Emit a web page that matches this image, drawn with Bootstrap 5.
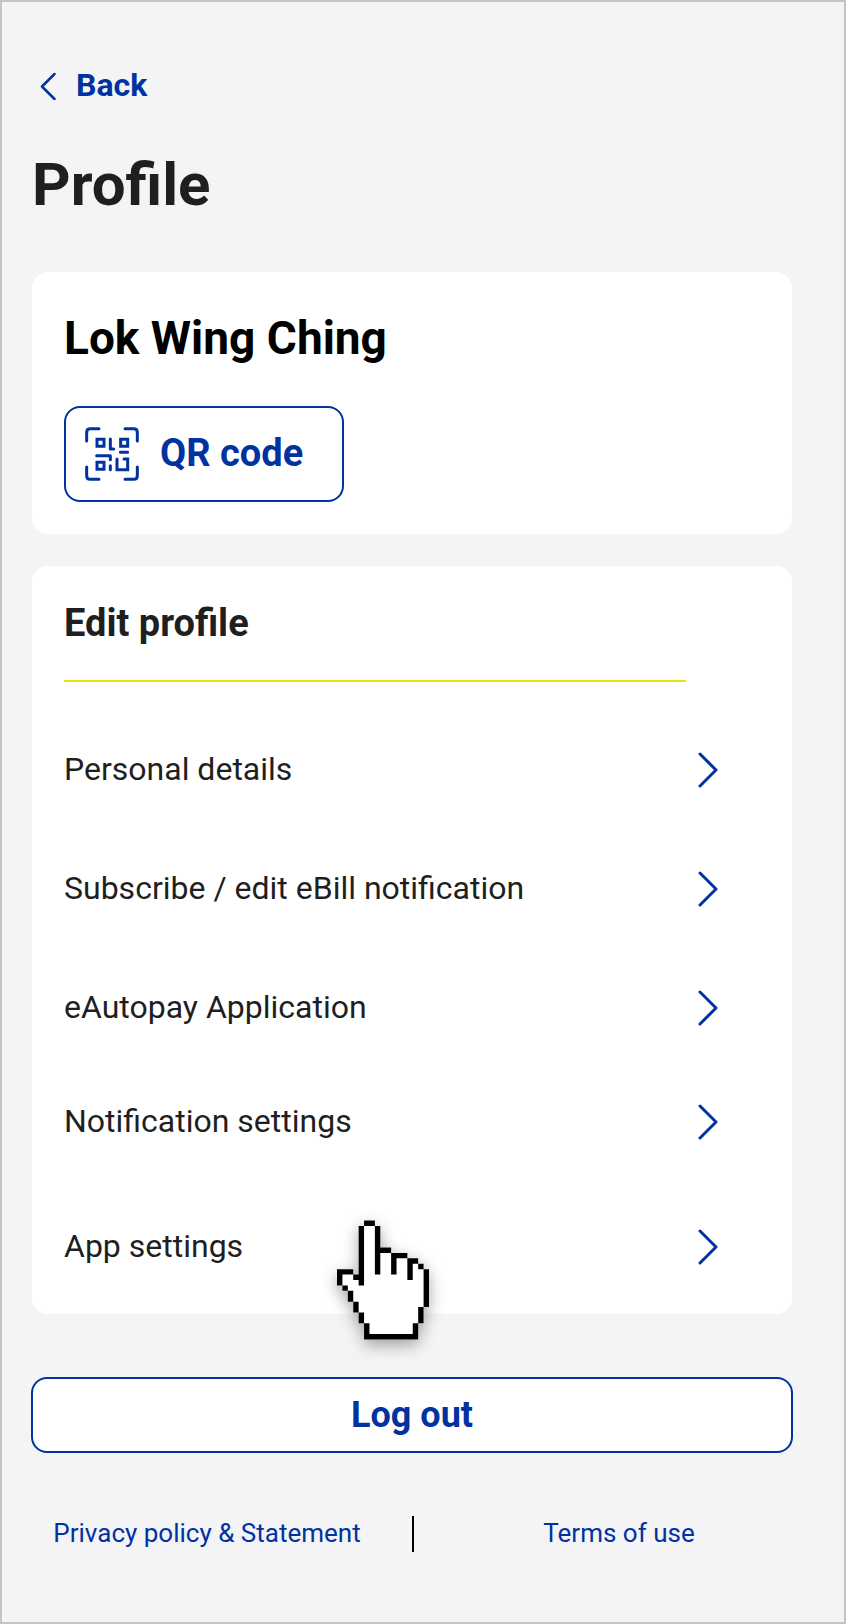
<!DOCTYPE html>
<html lang="en">
<head>
<meta charset="utf-8">
<meta name="viewport" content="width=device-width, initial-scale=1">
<title>Profile</title>
<link href="https://cdn.jsdelivr.net/npm/bootstrap@5.3.0/dist/css/bootstrap.min.css" rel="stylesheet">
<style>
  :root { --brand: #0032a0; --ink: #1f1f1f; --line: #c4c4c4; --sun: #f0dc0a; }
  body { font-family: Roboto, "Liberation Sans", sans-serif; background: #f4f4f7; color: var(--ink); font-size: 32px; line-height: 48px; }
  a, a:hover { color: var(--brand); }
  svg { display: block; flex: none; }
  .icon-line { fill: none; stroke: var(--brand); stroke-linecap: round; stroke-linejoin: round; margin-top: 2px; }
  .app-frame { border: 2px solid var(--line); }
  .screen { padding: 63px 52px 0 30px; }
  .back-link { line-height: 40px; gap: 20px; padding-left: 8px; }
  .page-title { font-size: 60px; line-height: 72px; margin: 44px 0 51px; }
  .panel { border: 0; border-radius: 16px; }
  .user-panel { padding: 38px 32px 32px; margin-bottom: 32px; }
  .user-name { font-size: 46px; line-height: 56px; margin-bottom: 40px; color: #000; }
  .btn-brand { --bs-btn-color: var(--brand); --bs-btn-bg: #fff; --bs-btn-border-color: var(--brand); --bs-btn-border-width: 2px; --bs-btn-border-radius: 16px;
    --bs-btn-hover-color: #fff; --bs-btn-hover-bg: var(--brand); --bs-btn-hover-border-color: var(--brand); --bs-btn-font-weight: 700; }
  .qr-btn { font-size: 38px; line-height: 54px; padding: 17px 39px 19px 19px; gap: 21px; }
  .edit-panel { padding: 34px 74px 44px 32px; }
  .section-title { font-size: 38px; line-height: 46px; padding-bottom: 34px; margin: 0 32px 63px 0; border-bottom: 2px solid var(--sun); }
  .settings { gap: 71px; }
  .settings a { color: var(--ink); }
  .settings .tight { margin-top: -5px; }
  .settings .loose { margin-top: 6px; }
  .hand { position: absolute; left: 40%; bottom: -26px; margin-left: 1px; pointer-events: none; overflow: visible; z-index: 2; filter: drop-shadow(0 5px 8px rgba(0, 0, 0, .35)); }
  .logout { font-size: 36px; line-height: 48px; padding: 12px; margin: 63px -1px; }
  .legal { font-size: 26px; line-height: 34px; padding: 0 20px 70px 0; }
  .legal .rule { width: 2px; height: 36px; background: #000; }
</style>
</head>
<body>
<div class="app-frame min-vh-100">
  <main class="screen d-flex flex-column">
    <a href="#" class="back-link d-flex align-items-center align-self-start fw-bold text-decoration-none">
      <svg class="icon-line" width="16" height="28" viewBox="0 0 16 28" stroke-width="2.5" aria-hidden="true"><path d="M14.5 2 2 14.5 14.5 27"/></svg>
      Back
    </a>
    <h1 class="page-title fw-bold">Profile</h1>

    <section class="card panel user-panel">
      <h2 class="user-name fw-bold">Lok Wing Ching</h2>
      <button type="button" class="btn btn-brand qr-btn d-flex align-items-center align-self-start">
        <svg class="icon-line" width="54" height="54" viewBox="0 0 162 162" stroke-width="9" aria-hidden="true">
          <path d="M42 5H16Q5 5 5 16V42M120 5H146Q157 5 157 16V42M5 120V146Q5 157 16 157H42M157 120V146Q157 157 146 157H120"/>
          <path stroke-linejoin="miter" d="M36 37H57V58H36ZM107 37H128V58H107ZM36 106H57V127H36Z"/>
          <path d="M76 36V66H86M106 76H128M35 86H76V98M76 116V128"/>
          <path stroke-linejoin="miter" d="M96 96V128H128V96H117"/>
        </svg>
        QR code
      </button>
    </section>

    <section class="card panel edit-panel">
      <h2 class="section-title fw-bold">Edit profile</h2>
      <nav class="settings d-flex flex-column" aria-label="Edit profile">
        <a href="#" class="d-flex justify-content-between align-items-center text-decoration-none">Personal details
          <svg class="icon-line" width="20" height="36" viewBox="0 0 20 36" stroke-width="3" aria-hidden="true"><path d="M2 2 18 18 2 34"/></svg></a>
        <a href="#" class="d-flex justify-content-between align-items-center text-decoration-none">Subscribe / edit eBill notification
          <svg class="icon-line" width="20" height="36" viewBox="0 0 20 36" stroke-width="3" aria-hidden="true"><path d="M2 2 18 18 2 34"/></svg></a>
        <a href="#" class="d-flex justify-content-between align-items-center text-decoration-none">eAutopay Application
          <svg class="icon-line" width="20" height="36" viewBox="0 0 20 36" stroke-width="3" aria-hidden="true"><path d="M2 2 18 18 2 34"/></svg></a>
        <a href="#" class="tight d-flex justify-content-between align-items-center text-decoration-none">Notification settings
          <svg class="icon-line" width="20" height="36" viewBox="0 0 20 36" stroke-width="3" aria-hidden="true"><path d="M2 2 18 18 2 34"/></svg></a>
        <a href="#" class="loose d-flex justify-content-between align-items-center text-decoration-none">App settings
          <svg class="icon-line" width="20" height="36" viewBox="0 0 20 36" stroke-width="3" aria-hidden="true"><path d="M2 2 18 18 2 34"/></svg></a>
      </nav>
      <!-- pixel hand pointer, one unit per pixel of the glyph -->
      <svg class="hand" width="92" height="120" viewBox="0 0 17 22" aria-hidden="true">
        <path fill="#fff" d="M5 0H7V1H8V5H10V6H13V7H15V8H16V9H17V16H16V19H15V22H5V19H4V17H3V15H2V13H1V12H0V9H3V10H4V1H5Z"/>
        <path d="M5 0H7V1H5ZM4 1H5V12H4V11H3V10H4ZM7 1H8V5H10V6H8V10H7ZM10 6H13V7H11V10H10ZM13 7H15V8H14V11H13ZM15 8H16V9H15ZM16 9H17V16H16ZM15 16H16V19H15ZM14 19H15V22H5V19H6V21H14ZM4 17H5V19H4ZM3 15H4V17H3ZM2 13H3V15H2ZM1 12H2V13H1ZM0 9H3V10H1V12H0Z"/>
      </svg>
    </section>

    <button type="button" class="btn btn-brand logout">Log out</button>
  </main>
  <footer class="legal d-flex text-center">
    <div class="flex-fill w-50"><a href="#" class="text-decoration-none">Privacy policy &amp; Statement</a></div>
    <div class="rule flex-shrink-0"></div>
    <div class="flex-fill w-50"><a href="#" class="text-decoration-none">Terms of use</a></div>
  </footer>
</div>
<script src="https://cdn.jsdelivr.net/npm/bootstrap@5.3.0/dist/js/bootstrap.bundle.min.js"></script>
</body>
</html>
